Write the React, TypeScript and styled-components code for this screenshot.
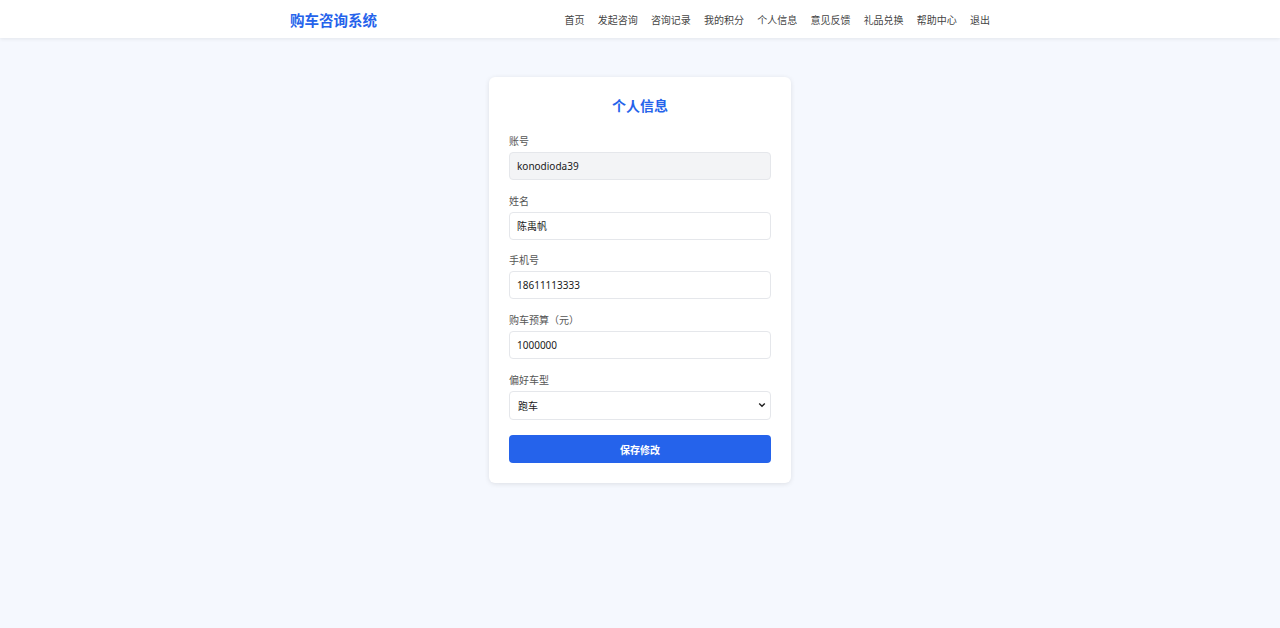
import React from "react";
import styled, { createGlobalStyle } from "styled-components";

const Global = createGlobalStyle`
  html, body { margin: 0; padding: 0; }
  body {
    background: #f5f8fe;
    font-family: "Noto Sans", "Noto Sans CJK SC", sans-serif;
    min-height: 628px;
  }
  * { box-sizing: border-box; }
`;

const Header = styled.header`
  height: 38px;
  background: #ffffff;
  box-shadow: 0 1px 4px rgba(0, 0, 0, 0.08);
`;

const HeaderInner = styled.div`
  width: 700px;
  height: 100%;
  margin: 0 auto;
  display: flex;
  align-items: center;
  justify-content: space-between;
`;

const Logo = styled.div`
  color: #2563eb;
  font-size: 14.5px;
  font-weight: 700;
  font-family: "Noto Sans CJK SC", sans-serif;
`;

const Nav = styled.nav`
  display: flex;
  gap: 13.2px;
`;

const NavLink = styled.a`
  font-size: 10px;
  color: #444;
  text-decoration: none;
  font-family: "Noto Sans CJK SC", sans-serif;
`;

const Main = styled.main`
  display: flex;
  justify-content: center;
  padding-top: 39px;
`;

const Card = styled.form`
  width: 302px;
  background: #ffffff;
  border-radius: 6px;
  box-shadow: 0 1px 5px rgba(0, 0, 0, 0.1);
  padding: 18px 20px 20px;
  display: flex;
  flex-direction: column;
`;

const Title = styled.h2`
  margin: 0 0 19px;
  text-align: center;
  color: #2563eb;
  font-size: 14px;
  line-height: 20px;
  font-weight: 700;
  font-family: "Noto Sans CJK SC", sans-serif;
`;

const Field = styled.div`
  display: flex;
  flex-direction: column;
  margin-bottom: 13.7px;
`;

const Label = styled.label`
  font-size: 10px;
  line-height: 14px;
  color: #555;
  margin-bottom: 4px;
  font-family: "Noto Sans CJK SC", sans-serif;
`;

const Input = styled.input<{ $readonly?: boolean }>`
  height: 28px;
  width: 100%;
  border: 1px solid #e5e7eb;
  border-radius: 4px;
  padding: 0 7px;
  font-size: 10px;
  color: #1a1a1a;
  background: ${(p) => (p.$readonly ? "#f3f4f6" : "#ffffff")};
  font-family: "Noto Sans", "Noto Sans CJK SC", sans-serif;
  outline: none;
`;

const chevron =
  "data:image/svg+xml;utf8," +
  encodeURIComponent(
    '<svg xmlns="http://www.w3.org/2000/svg" width="8" height="6" viewBox="0 0 8 6"><path d="M1.2 1.5 L4 4.3 L6.8 1.5" fill="none" stroke="#222" stroke-width="1.4"/></svg>'
  );

const Select = styled.select`
  appearance: none;
  -webkit-appearance: none;
  height: 29px;
  width: 100%;
  border: 1px solid #e5e7eb;
  border-radius: 4px;
  padding: 0 8px;
  font-size: 10px;
  color: #1a1a1a;
  background: #ffffff url("${chevron}") no-repeat right 4px center / 8px 6px;
  font-family: "Noto Sans CJK SC", sans-serif;
  outline: none;
`;

const Button = styled.button`
  margin-top: 2px;
  height: 28px;
  width: 100%;
  border: none;
  border-radius: 4px;
  background: #2563eb;
  color: #ffffff;
  font-size: 10px;
  font-weight: 700;
  font-family: "Noto Sans CJK SC", sans-serif;
`;

const navItems = ["首页", "发起咨询", "咨询记录", "我的积分", "个人信息", "意见反馈", "礼品兑换", "帮助中心", "退出"];

export default function App() {
  return (
    <>
      <Global />
      <Header>
        <HeaderInner>
          <Logo>购车咨询系统</Logo>
          <Nav>
            {navItems.map((n) => (
              <NavLink key={n} href="#">
                {n}
              </NavLink>
            ))}
          </Nav>
        </HeaderInner>
      </Header>
      <Main>
        <Card onSubmit={(e) => e.preventDefault()}>
          <Title>个人信息</Title>
          <Field>
            <Label>账号</Label>
            <Input $readonly readOnly defaultValue="konodioda39" />
          </Field>
          <Field>
            <Label>姓名</Label>
            <Input defaultValue="陈禹帆" />
          </Field>
          <Field>
            <Label>手机号</Label>
            <Input defaultValue="18611113333" />
          </Field>
          <Field>
            <Label>购车预算（元）</Label>
            <Input defaultValue="1000000" />
          </Field>
          <Field>
            <Label>偏好车型</Label>
            <Select defaultValue="跑车">
              <option>轿车</option>
              <option>SUV</option>
              <option>跑车</option>
              <option>MPV</option>
            </Select>
          </Field>
          <Button type="submit">保存修改</Button>
        </Card>
      </Main>
    </>
  );
}
